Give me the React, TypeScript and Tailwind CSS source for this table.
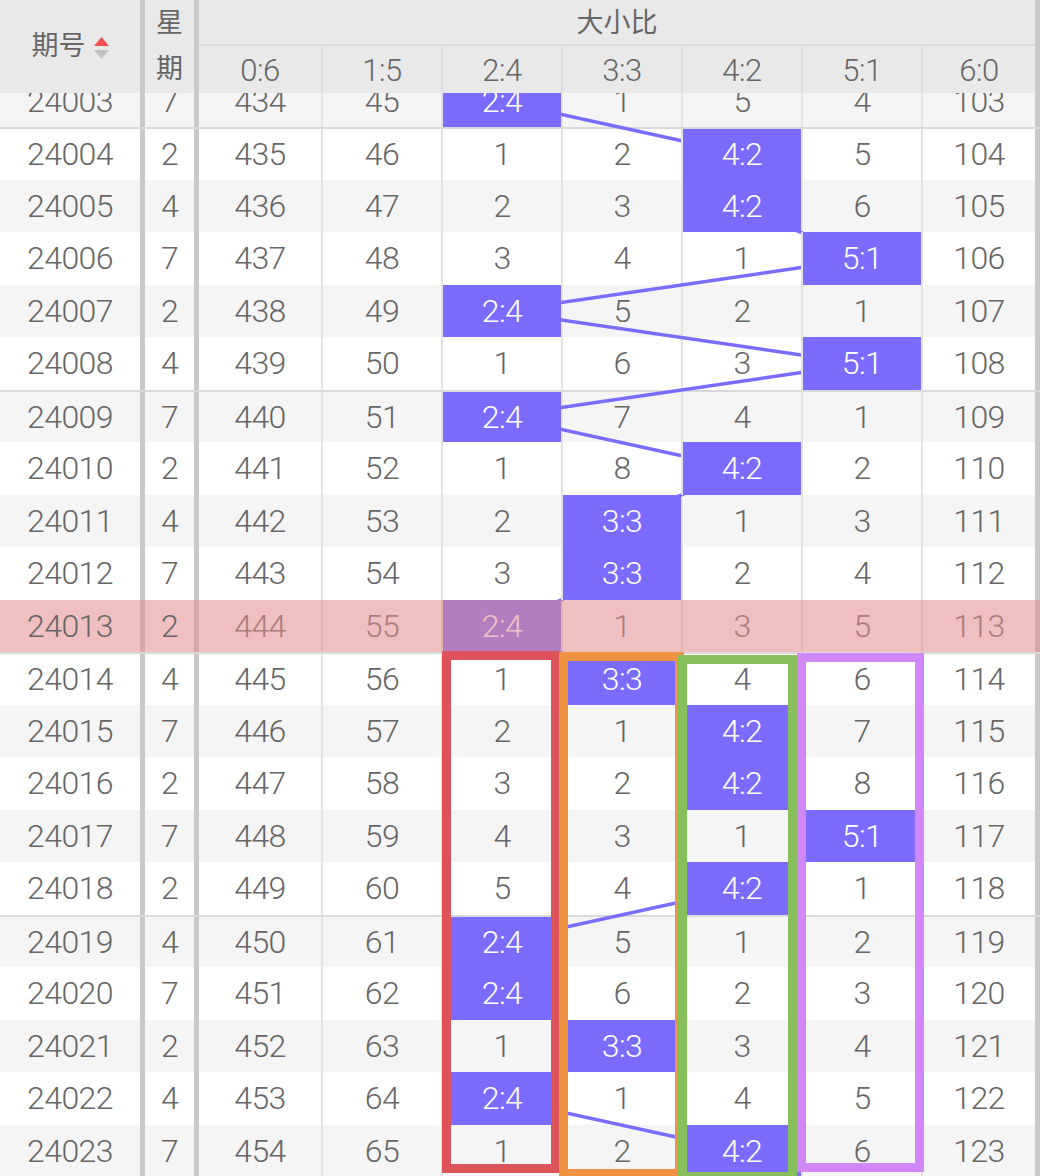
import React from "react";

const LABELS = ["0:6", "1:5", "2:4", "3:3", "4:2", "5:1", "6:0"];

type Row = { id: number; wk: number; v: (number | null)[]; hit: number };

const raw: [number, number, (number | null)[]][] = [
  [24003, 7, [434, 45, null, 1, 5, 4, 103]],
  [24004, 2, [435, 46, 1, 2, null, 5, 104]],
  [24005, 4, [436, 47, 2, 3, null, 6, 105]],
  [24006, 7, [437, 48, 3, 4, 1, null, 106]],
  [24007, 2, [438, 49, null, 5, 2, 1, 107]],
  [24008, 4, [439, 50, 1, 6, 3, null, 108]],
  [24009, 7, [440, 51, null, 7, 4, 1, 109]],
  [24010, 2, [441, 52, 1, 8, null, 2, 110]],
  [24011, 4, [442, 53, 2, null, 1, 3, 111]],
  [24012, 7, [443, 54, 3, null, 2, 4, 112]],
  [24013, 2, [444, 55, null, 1, 3, 5, 113]],
  [24014, 4, [445, 56, 1, null, 4, 6, 114]],
  [24015, 7, [446, 57, 2, 1, null, 7, 115]],
  [24016, 2, [447, 58, 3, 2, null, 8, 116]],
  [24017, 7, [448, 59, 4, 3, 1, null, 117]],
  [24018, 2, [449, 60, 5, 4, null, 1, 118]],
  [24019, 4, [450, 61, null, 5, 1, 2, 119]],
  [24020, 7, [451, 62, null, 6, 2, 3, 120]],
  [24021, 2, [452, 63, 1, null, 3, 4, 121]],
  [24022, 4, [453, 64, null, 1, 4, 5, 122]],
  [24023, 7, [454, 65, 1, 2, null, 6, 123]],
];

const rows: Row[] = raw.map(([id, wk, v]) => ({
  id,
  wk,
  v,
  hit: v.findIndex((x) => x === null),
}));

const ROW_H = 52.5;
const COL_CX = [260, 381, 501, 621, 741, 861, 978];
const GROUP_START = new Set([24004, 24009, 24014, 24019]);
const PINK_ID = 24013;

const GRID =
  "grid grid-cols-[140px_5px_49px_5px_122px_120px_120px_120px_120px_120px_114px_5px]";

function SortIcon() {
  return (
    <svg width="15" height="22" viewBox="0 0 15 22" className="mt-[2px]">
      <polygon points="7.5,0 15,9 0,9" fill="#f05050" />
      <polygon points="0,13 15,13 7.5,22" fill="#c2c2c2" />
    </svg>
  );
}

function Header() {
  return (
    <div className={`${GRID} grid-rows-[46px_47px] h-[93px] bg-[#e9e9e9] text-[#666]`}>
      <div className="row-span-2 flex items-center justify-center gap-[8px] text-[27px] leading-none">
        <span>期号</span>
        <SortIcon />
      </div>
      <div className="row-span-2 bg-[#c9c9c9]" />
      <div className="row-span-2 flex flex-col items-center justify-between pt-[7px] pb-[8px] text-[27px] leading-[32px]">
        <span>星</span>
        <span>期</span>
      </div>
      <div className="row-span-2 bg-[#c9c9c9]" />
      <div className="col-span-7 flex items-center justify-center border-b-2 border-[#dcdcdc] text-[27px] leading-none pt-[2px]">
        大小比
      </div>
      <div className="row-span-2 bg-[#c9c9c9]" />
      {LABELS.map((l, i) => (
        <div
          key={l}
          className={`flex items-center justify-center text-[31px] font-light leading-none pt-[2px] tracking-[-0.5px] ${
            i > 0 ? "border-l-2 border-[#dedede]" : ""
          }`}
        >
          {l}
        </div>
      ))}
    </div>
  );
}

function BodyRow({ r }: { r: Row }) {
  const pink = r.id === PINK_ID;
  const bg = pink ? "bg-white" : r.id % 2 === 1 ? "bg-[#f5f5f5]" : "bg-white";
  const sep = GROUP_START.has(r.id) ? "border-t-2 border-[#d9d9d9]" : "";
  return (
    <div
      className={`${GRID} h-[52.5px] ${bg} ${sep} text-[#666] text-[32px] font-light leading-none tracking-[-0.6px]`}
    >
      <div className={`flex items-center justify-center ${pink ? "relative z-30" : ""}`}>{r.id}</div>
      <div className="bg-[#c9c9c9]" />
      <div className={`flex items-center justify-center ${pink ? "relative z-30" : ""}`}>{r.wk}</div>
      <div className="bg-[#c9c9c9]" />
      {r.v.map((val, i) => {
        const hit = val === null;
        return (
          <div
            key={i}
            className={`flex ${i > 0 ? "border-l-2 border-[#e3e3e3]" : ""} ${hit ? "relative z-10" : ""}`}
          >
            <div
              className={`flex-1 flex items-center justify-center ${
                hit ? "bg-[#7b6cff] text-white" : ""
              }`}
            >
              {hit ? LABELS[i] : val}
            </div>
          </div>
        );
      })}
      <div className="bg-[#c9c9c9]" />
    </div>
  );
}

function Lines() {
  const segs: { x1: number; y1: number; x2: number; y2: number }[] = [];
  for (let i = 0; i < rows.length - 1; i++) {
    segs.push({
      x1: COL_CX[rows[i].hit],
      y1: i * ROW_H + ROW_H / 2,
      x2: COL_CX[rows[i + 1].hit],
      y2: (i + 1) * ROW_H + ROW_H / 2,
    });
  }
  return (
    <svg
      className="absolute left-0 top-0 z-[5] pointer-events-none"
      width={1040}
      height={rows.length * ROW_H}
    >
      {segs.map((s, k) => (
        <line key={k} x1={s.x1} y1={s.y1} x2={s.x2} y2={s.y2} stroke="#7b6cff" strokeWidth={3.5} />
      ))}
    </svg>
  );
}

export default function App() {
  const pinkIdx = rows.findIndex((r) => r.id === PINK_ID);
  return (
    <div className="relative w-[1040px] h-[1176px] overflow-hidden bg-white font-['Roboto','Noto_Sans_CJK_SC',sans-serif]">
      <Header />
      <div className="h-[1083px] overflow-hidden">
        <div className="relative -mt-[18.5px]">
          {rows.map((r) => (
            <BodyRow key={r.id} r={r} />
          ))}
          <Lines />
          <div
            className="absolute left-0 right-0 z-20 h-[52.5px] bg-[rgba(228,141,141,0.55)]"
            style={{ top: pinkIdx * ROW_H }}
          />
        </div>
      </div>

      {/* hand-drawn annotation frames */}
      <div className="absolute z-40 left-[442px] top-[651px] w-[118px] h-[522px] border-[9px] border-[#dc5459]" />
      <div className="absolute z-40 left-[559px] top-[652px] w-[125px] h-[526px] border-[9px] border-[#ef9241]" />
      <div className="absolute z-40 left-[678px] top-[655px] w-[119px] h-[526px] border-[9px] border-[#86bf5b]" />
      <div className="absolute z-40 left-[797px] top-[653px] w-[127px] h-[519px] border-[9px] border-[#d088f6]" />
    </div>
  );
}
